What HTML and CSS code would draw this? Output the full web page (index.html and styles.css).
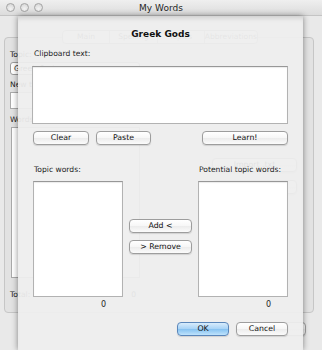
FILE: index.html
```html
<!DOCTYPE html>
<html lang="en">
<head>
  <meta charset="UTF-8" />
  <title>My Words</title>
  <link rel="stylesheet" href="styles.css">
</head>
<body>
  <div class="window">
    <div class="titlebar">
      <div class="lights"><span></span><span></span><span></span></div>
      <div class="wtitle">My Words</div>
    </div>

    <!-- main window, behind the sheet -->
    <div class="content">
      <div class="tabbox">
        <div class="tabs">
          <span>Main</span><span>Spelling</span><span>Topics</span><span>Abbreviations</span>
        </div>
        <div class="panel">
          <div class="col">
            <div class="blabel">Topic:</div>
            <div class="combo">Greek Gods</div>
            <div class="blabel">New topic:</div>
            <div class="field"></div>
            <div class="blabel">Words:</div>
            <div class="blist"></div>
            <div class="total"><span>Total:</span><span>0</span></div>
          </div>
          <div class="side">
            <div class="btn">Import .txt</div>
            <div class="btn">Export .txt</div>
          </div>
        </div>
      </div>
      <div class="footer"><div class="btn">Done</div></div>
    </div>

    <!-- sheet -->
    <div class="sheet">
      <div class="stitle">Greek Gods</div>
      <div class="label">Clipboard text:</div>
      <div class="textbox clip"></div>
      <div class="btnrow">
        <div class="btn clear">Clear</div>
        <div class="btn paste">Paste</div>
        <div class="btn learn">Learn!</div>
      </div>

      <div class="lists">
        <div class="label">Topic words:</div>
        <div></div>
        <div class="label">Potential topic words:</div>

        <div class="textbox list"></div>
        <div class="mid">
          <div class="btn">Add &lt;</div>
          <div class="btn">&gt; Remove</div>
        </div>
        <div class="textbox list"></div>

        <div class="count">0</div>
        <div></div>
        <div class="count">0</div>
      </div>

      <div class="actions">
        <div class="btn ok">OK</div>
        <div class="btn">Cancel</div>
      </div>
    </div>
  </div>
</body>
</html>
```

FILE: styles.css
```css
* {
  box-sizing: border-box;
  margin: 0;
  padding: 0;
}

body {
  background: #e8e8e8;
}

.window {
  position: relative;
  width: 322px;
  height: 350px;
  overflow: hidden;
  background: #e9e9e9;
  font-family: "DejaVu Sans", sans-serif;
  font-size: 7.6px;
  color: #1e1e1e;
}

/* title bar */
.titlebar {
  height: 16px;
  display: grid;
  grid-template-columns: 1fr auto 1fr;
  align-items: center;
  background: linear-gradient(#efefef, #dcdcdc);
  border-bottom: 1px solid #c4c4c4;
}

.lights {
  display: flex;
  gap: 5px;
  padding-left: 6px;
}

.lights span {
  width: 9px;
  height: 9px;
  border-radius: 50%;
  border: 1px solid #a4a4a4;
  background: radial-gradient(circle at 50% 70%, #f4f4f4, #d2d2d2);
}

.wtitle {
  font-size: 9px;
  color: #262626;
}

/* background window */
.content {
  padding: 21px 8px 0 4px;
}

.tabbox {
  height: 276px;
  border: 1px solid #c6c6c6;
  border-radius: 4px;
  background: #e2e2e2;
}

.tabs {
  display: flex;
  width: 196px;
  height: 14px;
  margin: -8px 0 0 57px;
  border: 1px solid #aaa;
  border-radius: 4px;
  background: #fafafa;
  color: #555;
}

.tabs span {
  flex: 1;
  text-align: center;
  line-height: 12px;
  border-left: 1px solid #bbb;
}

.tabs span:first-child {
  border-left: 0;
}

.panel {
  display: flex;
  justify-content: space-between;
  padding: 0 16px 0 5px;
}

.col {
  width: 130px;
  padding-top: 6px;
}

.blabel {
  line-height: 10px;
  margin-bottom: 2px;
}

.combo {
  height: 13px;
  margin-bottom: 5px;
  padding-left: 3px;
  line-height: 11px;
  border: 1px solid #9c9c9c;
  border-radius: 3px;
  background: #fff;
}

.field {
  height: 17px;
  margin-bottom: 6px;
  border: 1px solid #aaa;
  background: #fff;
}

.blist {
  height: 151px;
  margin: 2px 0 12px 1px;
  border: 1px solid #aaa;
  background: #fff;
}

.total {
  display: flex;
  justify-content: space-between;
  line-height: 10px;
  padding-right: 4px;
}

.side {
  display: flex;
  flex-direction: column;
  gap: 8px;
  width: 85px;
  padding-top: 114px;
}

.footer {
  display: flex;
  justify-content: flex-end;
  padding: 9px 8px 0 0;
}

.footer .btn {
  width: 56px;
}

/* shared controls */
.btn {
  height: 14px;
  line-height: 12px;
  text-align: center;
  border: 1px solid #9d9d9d;
  border-radius: 4px;
  background: linear-gradient(#ffffff, #f6f6f6 50%, #ececec 52%, #fbfbfb);
  box-shadow: 0 1px 1px rgba(0, 0, 0, 0.12);
  color: #111;
  font-size: 7.8px;
}

.textbox {
  background: #fff;
  border: 1px solid #b2b2b2;
  border-top-color: #979797;
  box-shadow: inset 0 1px 1px rgba(0, 0, 0, 0.08);
}

/* sheet */
.sheet {
  position: absolute;
  top: 16px;
  left: 18px;
  width: 285px;
  bottom: 0;
  padding: 12px 15px 0;
  background: rgba(238, 238, 238, 0.94);
  box-shadow: 0 0 6px rgba(0, 0, 0, 0.45), inset 0 5px 5px -3px rgba(0, 0, 0, 0.14);
}

.stitle {
  text-align: center;
  font-size: 9px;
  font-weight: bold;
  line-height: 12px;
  color: #111;
}

.label {
  line-height: 10px;
  padding-left: 1px;
}

.sheet > .label {
  margin-top: 9px;
}

.clip {
  height: 58px;
  margin: 7px 0 0 -1px;
}

.btnrow {
  display: flex;
  margin-top: 7px;
}

.clear {
  width: 56px;
}

.paste {
  width: 55px;
  margin-left: 7px;
}

.learn {
  width: 86px;
  margin-left: auto;
}

.lists {
  display: grid;
  grid-template-columns: 90px 1fr 90px;
  column-gap: 6px;
  margin-top: 20px;
}

.lists .label:last-of-type {
  padding-left: 2px;
}

.list {
  height: 116px;
  margin-top: 6px;
}

.mid {
  display: flex;
  flex-direction: column;
  gap: 7px;
  padding-top: 44px;
}

.count {
  text-align: right;
  line-height: 10px;
  margin-top: 3px;
  padding-right: 17px;
  font-size: 8px;
}

.actions {
  display: flex;
  justify-content: flex-end;
  gap: 7px;
  margin-top: 12px;
}

.actions .btn {
  width: 52px;
}

.btn.ok {
  border-color: #5a86ba;
  background: linear-gradient(#d8ecfc, #a6d2f6 50%, #86c2f1 52%, #bfe3fc);
}
```
